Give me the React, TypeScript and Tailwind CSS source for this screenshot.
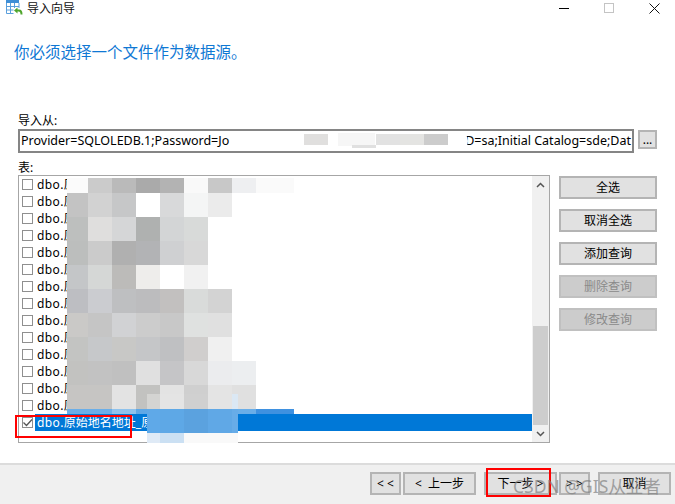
import React from "react";

const rowCount = 15;

// pixelated privacy mask over the table names; empty string = see-through
const mosaic = [
  ["bg-[#fbfbfb]", "bg-[#cbcbcb]", "bg-[#bababa]", "bg-[#aaaaaa]", "bg-[#b3b3b3]", "bg-[#f9f9f9]", "bg-[#c8c8c8]", "bg-[#eeeff1]", "bg-[#fafafa]"],
  ["bg-[#c3c3c3]", "bg-[#d2d2d2]", "bg-[#c6c7c8]", "bg-[#ffffff]", "bg-[#d8d9da]", "bg-[#f4f5f5]", "bg-[#ebebeb]", "", ""],
  ["bg-[#bdbfbe]", "bg-[#dfdedd]", "bg-[#d5d6d7]", "bg-[#afb1b0]", "bg-[#d3d5d6]", "bg-[#d8dad9]", "", "", ""],
  ["bg-[#bcbebd]", "bg-[#cbcbcb]", "bg-[#b0b0b0]", "bg-[#b2b3b5]", "bg-[#cfd0d2]", "bg-[#d8d8d8]", "", "", ""],
  ["bg-[#c4c6c8]", "bg-[#d5d7d6]", "bg-[#bcbbb9]", "bg-[#eeedeb]", "bg-[#ffffff]", "bg-[#f1f1f1]", "", "", ""],
  ["bg-[#bdbec2]", "bg-[#cbccd0]", "bg-[#bebfc1]", "bg-[#bcbcbe]", "bg-[#c2c0bf]", "bg-[#d9dbda]", "bg-[#d3d3d3]", "", ""],
  ["bg-[#cac9c7]", "bg-[#c5c5c5]", "bg-[#d1d2d4]", "bg-[#cccccc]", "bg-[#c8c8c8]", "bg-[#dfe1e0]", "bg-[#e0e0e0]", "", ""],
  ["bg-[#c3c4c2]", "bg-[#c6c8ca]", "bg-[#c8c8c6]", "bg-[#c5c6c8]", "bg-[#bfc0c2]", "bg-[#d0cecd]", "bg-[#f0f0f0]", "", ""],
  ["bg-[#c2c2c0]", "bg-[#c2c2c2]", "bg-[#c0c0c0]", "bg-[#e0e0e0]", "bg-[#c5c5c7]", "bg-[#d8d8d8]", "bg-[#ebecee]", "bg-[#eceef0]", ""],
  ["bg-[#c6c5c3]", "bg-[#c6c5c3]", "bg-[#e3e3e3]", "bg-[#c2c2c0]", "bg-[#e3e3e3]", "bg-[#cfcfcf]", "bg-[#e4e4e4]", "bg-[#e0e0e0]", ""],
  ["bg-[#6aaee8]", "bg-[#6aaee8]", "bg-[#8fc2ec]", "bg-[#5fa8e6]", "bg-[#7ab6ea]", "bg-[#62aae6]", "bg-[#6aaee8]", "bg-[#6aaee8]", "bg-[#3f91e0]"],
];

const patch = [
  ["bg-[#d4d4d2]", "bg-[#e4e4e4]", "bg-[#d0d0d0]", "bg-[#e4e4e4]", "bg-[#dbe8f4]"],
  ["bg-[#5fa9e8]", "bg-[#5ea8e6]", "bg-[#5ba2df]", "bg-[#60a8e6]", "bg-[#67ace8]"],
  ["bg-[#dfeaf6]", "bg-[#cbe0f3]", "bg-[#f9f9f9]", "bg-[#f9f9f9]", "bg-[#f9f9f9]"],
];

function AppIcon() {
  return (
    <svg width="18" height="17" viewBox="0 0 18 17" className="ml-[5px] shrink-0">
      <rect x="1" y="0" width="13" height="3" fill="#3f8fd6" />
      <path d="M1.5 3v10.5h7M14 3v5M1.5 6.5h12.500M1.500 10h7M5.500 3v10.500M9.500 3v5" stroke="#5a9fdc" fill="none" />
      <path d="M9 10.500 12.500 7.500v2h1.500c2.500 0 3.500 1.500 3.500 5h-2c0-2-.5-3-2-3h-1v2z" fill="#4fa52c" />
    </svg>
  );
}

function Check({ checked }: { checked?: boolean }) {
  return (
    <span className="w-[11px] h-[11px] border border-[#8f8f8f] bg-white shrink-0 relative">
      {checked && (
        <svg width="11" height="11" viewBox="0 0 11 11" className="absolute -left-px -top-px">
          <path d="M1.500 5.500 4.500 8.500 10 2.500" stroke="#555" strokeWidth="1.300" fill="none" />
        </svg>
      )}
    </span>
  );
}

function Row({ selected }: { selected?: boolean }) {
  return (
    <div className="h-[17px] flex items-center pl-[3px] gap-[2px] shrink-0">
      <Check checked={selected} />
      <span
        className={
          selected
            ? "pl-[2px] h-[17px] leading-[17px] flex-1 bg-[#0078d7] text-white"
            : "pl-[2px] h-[17px] leading-[17px] flex-1 text-black"
        }
      >
        <span className="tracking-[0.4px]">dbo.</span>原始地名地址_原
      </span>
    </div>
  );
}

function SideButton({ label, disabled }: { label: string; disabled?: boolean }) {
  return (
    <button
      className={
        disabled
          ? "h-[23px] w-[98px] border-2 border-[#c0c0c0] bg-[#cccccc] text-[#8a8a8a]"
          : "h-[23px] w-[98px] border-2 border-[#b4b4b4] bg-[#e1e1e1] text-black"
      }
    >
      {label}
    </button>
  );
}

function NavButton({ label, wide }: { label: string; wide?: boolean }) {
  return (
    <button
      className={
        wide
          ? "h-[23px] w-[73px] border-2 border-[#b4b4b4] bg-[#e1e1e1] text-black whitespace-pre"
          : "h-[23px] w-[31px] border-2 border-[#b4b4b4] bg-[#e1e1e1] text-black whitespace-pre"
      }
    >
      {label}
    </button>
  );
}

export default function App() {
  return (
    <div className="relative w-[675px] h-[504px] overflow-hidden flex flex-col bg-white text-[12px] font-['Noto_Sans','Noto_Sans_CJK_SC',sans-serif]">
      {/* title bar */}
      <div className="h-[17px] flex items-center relative">
        <AppIcon />
        <span className="ml-[4px] text-[#111]">导入向导</span>
        <div className="absolute right-[15px] top-[3px] flex items-start gap-[35px]">
          <span className="w-[10px] h-px bg-black mt-[5px]" />
          <span className="w-[10px] h-[10px] border border-[#c4c4c4]" />
          <svg width="11" height="11" viewBox="0 0 11 11">
            <path d="M.5.500 10.500 10.500M10.500.500.5 10.500" stroke="#111" fill="none" />
          </svg>
        </div>
      </div>

      <h1 className="mt-[25px] ml-[14px] h-5 leading-5 text-[15.5px] font-normal text-[#0f78d4]">
        你必须选择一个文件作为数据源。
      </h1>

      <div className="mt-[51px] ml-[18px] h-4 leading-4">导入从:</div>
      <div className="ml-[18px] flex items-start gap-[4px]">
        <div className="relative w-[616px] h-[24px] border-2 border-[#858585] flex items-center justify-between pl-[1px] pr-[1px] overflow-hidden whitespace-nowrap text-[12.5px] text-black">
          <span>Provider=SQLOLEDB.1;Password=Jo</span>
          <span>D=sa;Initial Catalog=sde;Dat</span>
          {/* smudged-out part of the connection string */}
          <div className="absolute left-[210px] top-0 w-[238px] h-full bg-white rounded-l-[10px] rounded-r-full">
            <div className="absolute left-[74px] top-[3px] w-[24px] h-[11px] bg-[#e0dfde]" />
            <div className="absolute left-[108px] top-[2px] w-[37px] h-[13px] bg-[#f6f6f6]" />
            <div className="absolute left-[146px] top-[3px] w-[24px] h-[11px] bg-[#e2e2e2]" />
            <div className="absolute left-[170px] top-[3px] w-[24px] h-[11px] bg-[#e4e4e2]" />
            <div className="absolute left-[194px] top-[3px] w-[24px] h-[11px] bg-[#cccccc]" />
            <div className="absolute left-[122px] top-[14px] w-[24px] h-[3px] bg-[#e0e0e0]" />
          </div>
        </div>
        <button className="mt-px w-[19px] h-[19px] border-2 border-[#b4b4b4] bg-[#e1e1e1] leading-[13px]">...</button>
      </div>

      <div className="mt-[7px] ml-[18px] h-[15px] leading-[15px]">表:</div>
      <div className="ml-[18px] flex items-start gap-[9px]">
        <div className="w-[532px] h-[268px] border border-[#a6a6a6] flex overflow-hidden">
          <div className="flex-1 flex flex-col">
            {Array.from({ length: rowCount }, (_, i) => (
              <Row key={i} selected={i === rowCount - 1} />
            ))}
          </div>
          <div className="w-[17px] bg-[#f0f0f0] flex flex-col">
            <div className="h-[17px] flex items-center justify-center">
              <svg width="9" height="6" viewBox="0 0 9 6">
                <path d="M1 5 4.500 1.500 8 5" stroke="#555" strokeWidth="1.500" fill="none" />
              </svg>
            </div>
            <div className="flex-1 flex flex-col justify-end">
              <div className="h-[99px] w-[15px] mx-auto bg-[#cdcdcd]" />
            </div>
            <div className="h-[17px] flex items-center justify-center">
              <svg width="9" height="6" viewBox="0 0 9 6">
                <path d="M1 1 4.500 4.500 8 1" stroke="#555" strokeWidth="1.500" fill="none" />
              </svg>
            </div>
          </div>
        </div>
        <div className="pt-px flex flex-col gap-[10px]">
          <SideButton label="全选" />
          <SideButton label="取消全选" />
          <SideButton label="添加查询" />
          <SideButton label="删除查询" disabled />
          <SideButton label="修改查询" disabled />
        </div>
      </div>

      <div className="mt-auto h-[41px] border-t-2 border-[#dcdcdc] bg-[#f0f0f0] flex items-start justify-end pt-[7px] pr-[4px]">
        <NavButton label="< <" />
        <div className="ml-[2px]">
          <NavButton label="<  上一步" wide />
        </div>
        <div className="ml-[8px]">
          <NavButton label="下一步 >" wide />
        </div>
        <div className="ml-[2px]">
          <NavButton label="> >" />
        </div>
        <div className="ml-[8px]">
          <NavButton label="取消" wide />
        </div>
      </div>

      {/* mosaic drawn over the table names */}
      <div className="absolute left-[67px] top-[178px] grid grid-cols-[21px_24px_24px_24px_24px_24px_24px_24px_38px] grid-rows-[15px_repeat(9,24px)_5px]">
        {mosaic.flat().map((c, i) => (
          <div key={i} className={c} />
        ))}
      </div>
      <div className="absolute left-[147px] top-[394px] grid grid-cols-[13px_24px_24px_24px_6px] grid-rows-[15px_24px_10px]">
        {patch.flat().map((c, i) => (
          <div key={i} className={c} />
        ))}
      </div>

      {/* red annotation boxes */}
      <div className="absolute left-[15px] top-[415px] w-[117px] h-[23px] border-[2px] border-[#ff0000]" />
      <div className="absolute left-[486px] top-[468px] w-[65px] h-[29px] border-[2px] border-[#ff0000]" />

      {/* watermark */}
      <div className="absolute left-[513px] top-[474px] text-[17.5px] leading-[24px] text-[#808080]/70 whitespace-nowrap">
        CSDN @GIS从业者
      </div>
    </div>
  );
}
